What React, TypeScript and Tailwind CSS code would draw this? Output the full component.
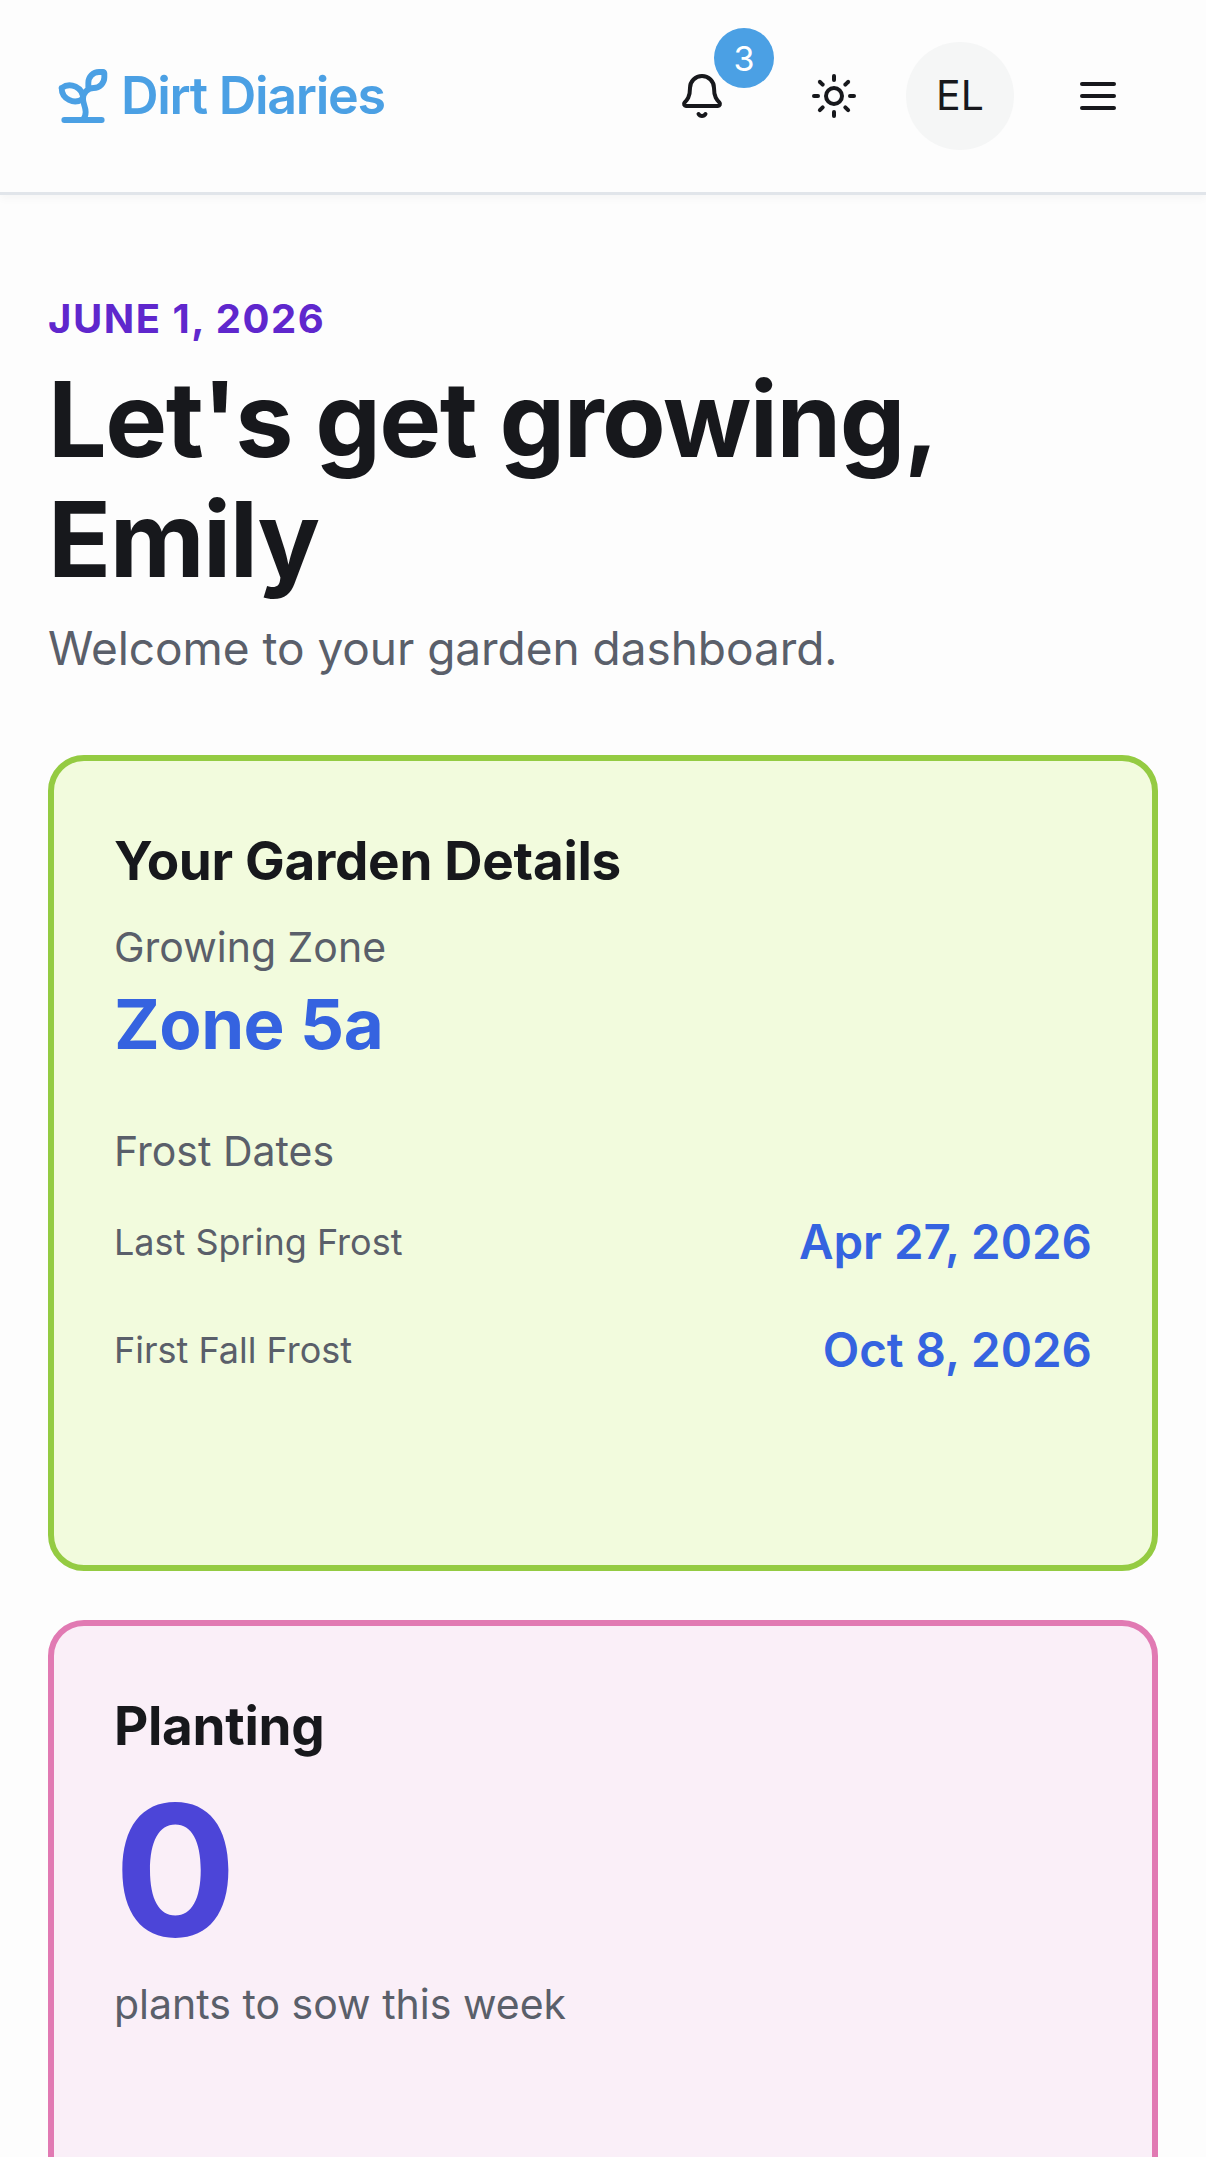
import { Bell, Sprout, Sun } from "lucide-react";

const App = () => {
  return (
    <div className="h-[2157px] overflow-hidden bg-[#fdfdfd] font-['Inter',sans-serif] text-[#17181c]">
      {/* Header */}
      <header className="h-[195px] flex items-center justify-between pl-[51px] pr-[90px] border-b-[3px] border-[#e1e5ea] shadow-[0_4px_8px_rgba(0,0,0,0.03)]">
        <div className="flex items-center gap-[6px] text-[#4ba0e4]">
          <Sprout size={64} strokeWidth={2.2} />
          <span className="text-[52px] font-semibold tracking-[-1.3px]">Dirt Diaries</span>
        </div>
        <div className="flex items-center">
          <div className="relative mr-[84px]">
            <Bell size={48} strokeWidth={2} />
            <span className="absolute top-[-44px] left-[36px] w-[60px] h-[60px] rounded-full bg-[#4ba0e4] text-white text-[34px] flex items-center justify-center">
              3
            </span>
          </div>
          <Sun size={48} strokeWidth={2} className="mr-[48px]" />
          <div className="w-[108px] h-[108px] rounded-full bg-[#f5f6f6] flex items-center justify-center text-[41px] mr-[66px]">
            EL
          </div>
          <div className="w-[36px] flex flex-col gap-[8px]">
            <div className="h-[4px] rounded-full bg-[#17181c]"></div>
            <div className="h-[4px] rounded-full bg-[#17181c]"></div>
            <div className="h-[4px] rounded-full bg-[#17181c]"></div>
          </div>
        </div>
      </header>

      <main className="px-[48px] pt-[100px]">
        <p className="text-[40px] leading-[48px] font-bold text-[#5f27cd] uppercase tracking-[1.5px]">June 1, 2026</p>
        <h1 className="mt-[16px] text-[104px] leading-[120px] font-bold tracking-[-1.5px]">Let's get growing, Emily</h1>
        <p className="mt-[19px] text-[46px] leading-[60px] text-[#5a5f6a] tracking-[-0.05px]">Welcome to your garden dashboard.</p>

        {/* Garden details */}
        <section className="mt-[77px] h-[816px] rounded-[36px] border-[6px] border-[#94cb42] bg-[#f2fbdd] px-[60px] pt-[68px]">
          <h2 className="text-[53px] leading-[64px] font-bold tracking-[-0.3px]">Your Garden Details</h2>
          <p className="mt-[26px] text-[41px] leading-[56px] text-[#5a5f6a]">Growing Zone</p>
          <p className="mt-[7px] text-[69px] leading-[84px] font-bold tracking-[-0.5px] text-[#3563e0]">Zone 5a</p>
          <p className="mt-[55px] text-[41px] leading-[60px] text-[#5a5f6a]">Frost Dates</p>
          <div className="mt-[29px] flex items-center justify-between h-[64px]">
            <span className="text-[36px] text-[#5a5f6a]">Last Spring Frost</span>
            <span className="text-[47.5px] font-semibold text-[#3563e0]">Apr 27, 2026</span>
          </div>
          <div className="mt-[44px] flex items-center justify-between h-[64px]">
            <span className="text-[36px] text-[#5a5f6a]">First Fall Frost</span>
            <span className="text-[47.5px] font-semibold text-[#3563e0]">Oct 8, 2026</span>
          </div>
        </section>

        {/* Planting */}
        <section className="mt-[49px] h-[800px] rounded-[36px] border-[6px] border-[#e17ab3] bg-[#faeff8] px-[60px] pt-[68px]">
          <h2 className="text-[53px] leading-[64px] font-bold tracking-[-0.3px]">Planting</h2>
          <p className="mt-[12px] text-[182px] leading-[200px] font-bold text-[#4c45d8]">0</p>
          <p className="mt-[4px] text-[41px] leading-[60px] text-[#5a5f6a]">plants to sow this week</p>
        </section>
      </main>
    </div>
  );
};

export default App;
